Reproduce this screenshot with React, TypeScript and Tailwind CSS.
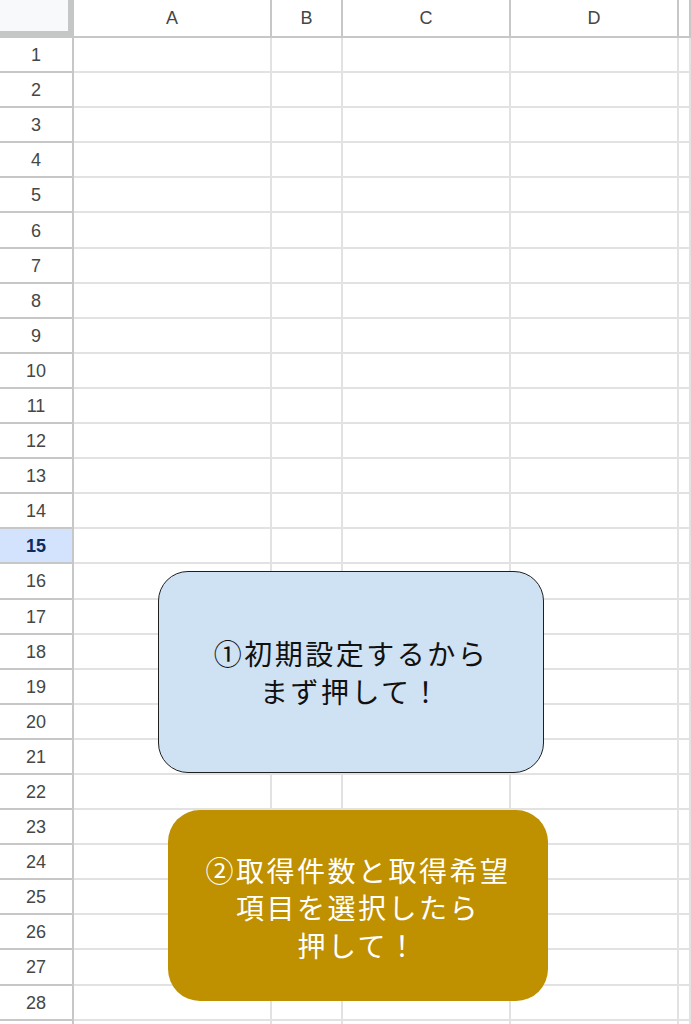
const columns = [
  { label: "A", width: "w-[198px]" },
  { label: "B", width: "w-[71px]" },
  { label: "C", width: "w-[168px]" },
  { label: "D", width: "w-[168px]" },
  { label: "", width: "flex-1" },
];

const rows = Array.from({ length: 29 }, (_, i) => i + 1);
const lastLabeled = 28;
const activeRow = 15;

const sans = "font-['Liberation_Sans',Arial,sans-serif]";
const jp = "font-['Noto_Sans_CJK_JP','Noto_Sans',sans-serif]";

function HeaderRow() {
  return (
    <div className="flex h-[38px] shrink-0">
      <div className="w-[74px] h-[38px] shrink-0 bg-[#f8f9fa] border-r-[6px] border-b-[7px] border-[#c4c7c5]" />
      {columns.map((c, i) => (
        <div
          key={i}
          className={`${c.width} shrink-0 flex items-center justify-center pt-[1px] border-r-2 border-b-2 border-[#c7c7c7] text-[18px] text-[#444746] ${sans}`}
        >
          {c.label}
        </div>
      ))}
    </div>
  );
}

function SheetRow({ n }: { n: number }) {
  const active = n === activeRow;
  return (
    <div className="flex h-[35.1px] shrink-0">
      <div
        className={`w-[74px] shrink-0 flex items-center justify-center pt-[2px] border-r-2 border-b-2 border-[#c7c7c7] text-[18px] ${sans} ${
          active ? "bg-[#d3e3fd] text-[#0f2a5c] font-bold" : "bg-white text-[#444746]"
        }`}
      >
        {n <= lastLabeled ? n : null}
      </div>
      {columns.map((c, i) => (
        <div key={i} className={`${c.width} shrink-0 border-r-2 border-b-2 border-[#e2e2e2]`} />
      ))}
    </div>
  );
}

export default function App() {
  return (
    <div className="relative w-[691px] h-[1024px] overflow-hidden bg-white">
      <div className="flex flex-col">
        <HeaderRow />
        {rows.map((n) => (
          <SheetRow key={n} n={n} />
        ))}
      </div>

      {/* floating button drawings */}
      <div
        className={`absolute left-[158px] top-[571px] w-[386px] h-[202px] rounded-[30px] border-[1.5px] border-[#1f1f1f] bg-[#cfe2f3] flex flex-col items-center justify-center text-[28px] leading-[38px] tracking-[2.5px] text-[#111] ${jp}`}
      >
        <div>①初期設定するから</div>
        <div>まず押して！</div>
      </div>

      <div
        className={`absolute left-[168px] top-[810px] w-[380px] h-[191px] rounded-[32px] bg-[#bf9000] flex flex-col items-center justify-center pt-[5px] text-[28px] leading-[37.5px] tracking-[2.5px] text-white ${jp}`}
      >
        <div>②取得件数と取得希望</div>
        <div>項目を選択したら</div>
        <div>押して！</div>
      </div>
    </div>
  );
}
